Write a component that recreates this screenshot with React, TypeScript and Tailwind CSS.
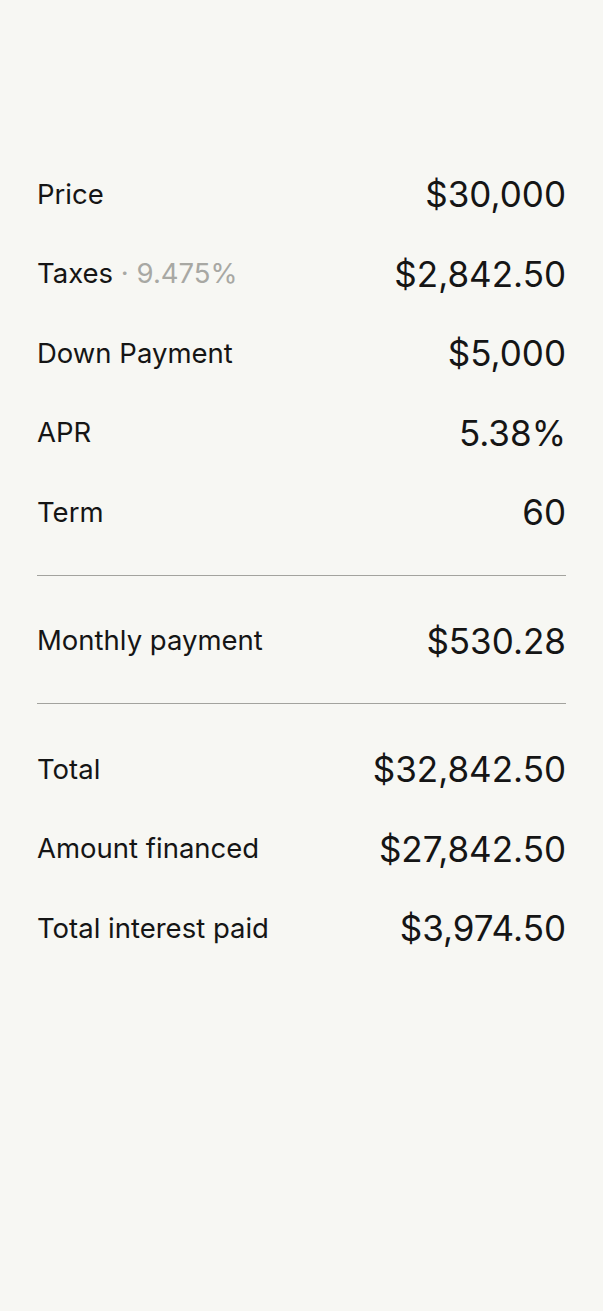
import React from 'react';

type Row = { label: string; note?: string; value: string };

const inputs: Row[] = [
  { label: 'Price', value: '$30,000' },
  { label: 'Taxes', note: '9.475%', value: '$2,842.50' },
  { label: 'Down Payment', value: '$5,000' },
  { label: 'APR', value: '5.38%' },
  { label: 'Term', value: '60' },
];

const totals: Row[] = [
  { label: 'Total', value: '$32,842.50' },
  { label: 'Amount financed', value: '$27,842.50' },
  { label: 'Total interest paid', value: '$3,974.50' },
];

const LineItem = ({ row }: { row: Row }) => (
  <div className="flex h-[79.5px] items-center justify-between pt-[3px]">
    <span className="text-[27.5px] text-[#151515]">
      {row.label}
      {row.note && <span className="text-[#a8a8a3]"> · {row.note}</span>}
    </span>
    <span className="text-[35px] text-[#151515]">{row.value}</span>
  </div>
);

const Divider = () => <div className="my-6 h-px bg-[#a3a39e]" />;

export default function App() {
  return (
    <div
      className="min-h-[1311px] bg-[#f7f7f3] px-[37px] pt-[153px]"
      style={{ fontFamily: 'Inter, "Noto Sans", sans-serif' }}
    >
      {inputs.map((r) => (
        <LineItem key={r.label} row={r} />
      ))}
      <Divider />
      <LineItem row={{ label: 'Monthly payment', value: '$530.28' }} />
      <Divider />
      {totals.map((r) => (
        <LineItem key={r.label} row={r} />
      ))}
    </div>
  );
}
